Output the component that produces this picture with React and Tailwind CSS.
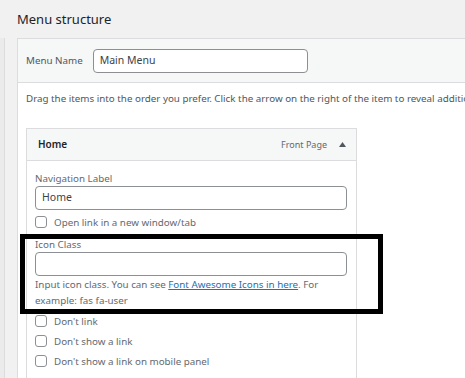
import React from "react";

function Check({ label }) {
  return (
    <div className="flex h-[20px] items-center">
      <span className="block h-[12px] w-[12px] shrink-0 rounded-[3px] border border-[#8c8f94] bg-white" />
      <span className="ml-[7px] text-[9.8px] leading-[15px] text-[#646970]">{label}</span>
    </div>
  );
}

export default function App() {
  return (
    <div className="relative h-[378px] w-[465px] overflow-hidden bg-[#f1f1f1] font-['Noto_Sans',sans-serif] text-[#3c434a]">
      <h2 className="h-[38px] pl-[17px] pt-[10px] text-[13px] font-normal leading-[18px] text-[#1d2327]">
        Menu structure
      </h2>
      <div className="flex h-[340px]">
        <div className="w-[5px] shrink-0 border-r border-[#dcdcde] bg-[#ebebeb]" />
        <div className="ml-[12px] min-w-0 flex-1 overflow-hidden border-l border-t border-[#dcdcde] bg-white">
          <div className="flex h-[44px] items-center border-b border-[#dcdcde] bg-[#f6f7f7] pl-[8px]">
            <span className="text-[9.8px] leading-[15px] text-[#50575e]">Menu Name</span>
            <div className="ml-[10px] flex h-[24px] w-[215px] shrink-0 items-center rounded-[4px] border border-[#8c8f94] bg-white pl-[6px] text-[10.5px] text-[#3c434a]">
              Main Menu
            </div>
          </div>
          <div className="pl-[8px] pt-[8px]">
            <p className="whitespace-nowrap text-[9.8px] leading-[15px] text-[#50575e]">
              Drag the items into the order you prefer. Click the arrow on the right of the item to reveal additional configuration options.
            </p>
            <div className="mt-[22px] w-[331px] border border-[#dcdcde]">
              <div className="flex h-[32px] items-center border-b border-[#dcdcde] bg-[#f6f7f7] pl-[11px] pr-[10px]">
                <span className="text-[10px] font-semibold text-[#1d2327]">Home</span>
                <span className="ml-auto text-[9px] text-[#646970]">Front Page</span>
                <svg className="ml-[12px]" width="7" height="5" viewBox="0 0 7 5">
                  <path d="M3.5 0 L7 5 L0 5 Z" fill="#50575e" />
                </svg>
              </div>
              <div className="flex h-[220px] flex-col pl-[8px] pt-[10px]">
                <div className="h-[15px] text-[9.8px] leading-[15px] text-[#646970]">Navigation Label</div>
                <div className="flex h-[24px] w-[312px] items-center rounded-[4px] border border-[#8c8f94] bg-white pl-[6px] text-[10.5px] text-[#3c434a]">
                  Home
                </div>
                <div className="mt-[6px] flex h-[12px] items-center">
                  <span className="block h-[12px] w-[12px] shrink-0 rounded-[3px] border border-[#8c8f94] bg-white" />
                  <span className="ml-[7px] text-[9.8px] leading-[15px] text-[#646970]">Open link in a new window/tab</span>
                </div>
                <div className="mt-[9px] h-[15px] text-[9.8px] leading-[15px] text-[#646970]">Icon Class</div>
                <div className="h-[24px] w-[312px] rounded-[4px] border border-[#8c8f94] bg-white" />
                <p className="mt-[1px] w-[312px] text-[9.8px] leading-[16px] text-[#646970]">
                  Input icon class. You can see{" "}
                  <span className="text-[#2271b1] underline">Font Awesome Icons in here</span>. For
                  <br />
                  example: fas fa-user
                </p>
                <div className="mt-[2px]">
                  <Check label="Don't link" />
                  <Check label="Don't show a link" />
                  <Check label="Don't show a link on mobile panel" />
                </div>
              </div>
            </div>
          </div>
        </div>
      </div>
      <div className="absolute left-[20px] top-[234px] h-[80px] w-[363px] border-[5px] border-black" />
    </div>
  );
}
